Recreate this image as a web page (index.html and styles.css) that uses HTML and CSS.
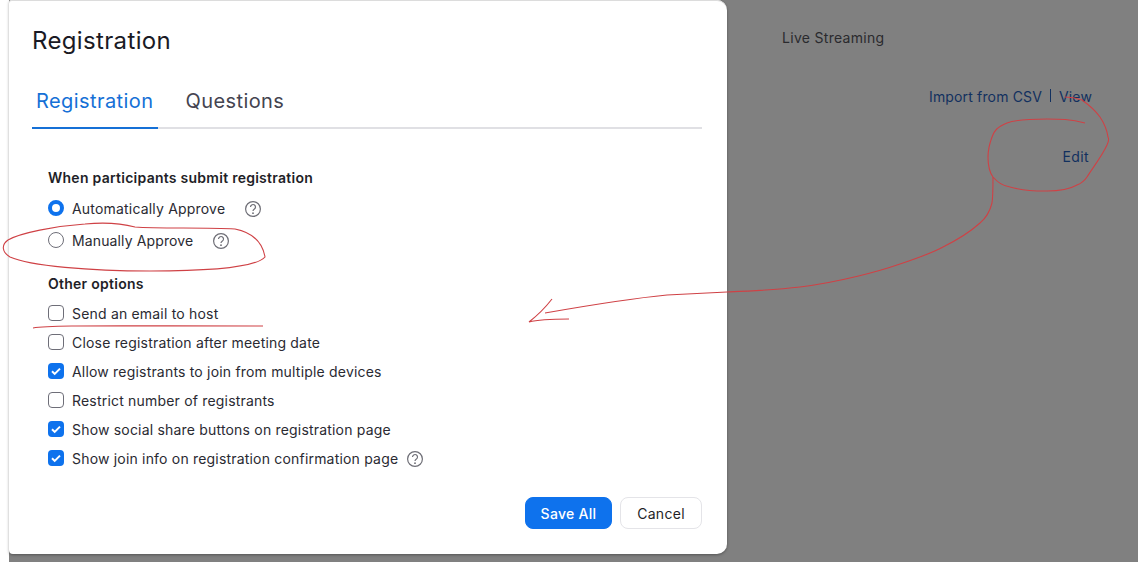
FILE: index.html
```html
<!DOCTYPE html>
<html lang="en">
<head>
<meta charset="utf-8">
<title>Registration</title>
<link rel="stylesheet" href="styles.css">
</head>
<body>
<div class="backdrop">
  <div class="page-top">Live Streaming</div>
  <div class="page-links"><span>Import from CSV</span><i class="sep"></i><span>View</span></div>
  <div class="page-edit">Edit</div>
</div>
<section class="modal">
  <h1 class="title">Registration</h1>
  <div class="tabs">
    <div class="tab active">Registration</div>
    <div class="tab">Questions</div>
  </div>
  <div class="body">
    <h2 class="group-title">When participants submit registration</h2>
    <div class="radios">
      <div class="row"><span class="radio on"></span><span>Automatically Approve</span>
        <svg class="help wide" viewBox="0 0 16 16"><circle cx="8" cy="8" r="7.4"/><path d="M5.5 6.1a2.5 2.5 0 1 1 3.9 2c-.9.6-1.4 1-1.4 2"/><circle class="dot" cx="8" cy="12.2" r=".9"/></svg></div>
      <div class="row"><span class="radio"></span><span>Manually Approve</span>
        <svg class="help wide" viewBox="0 0 16 16"><circle cx="8" cy="8" r="7.4"/><path d="M5.5 6.1a2.5 2.5 0 1 1 3.9 2c-.9.6-1.4 1-1.4 2"/><circle class="dot" cx="8" cy="12.2" r=".9"/></svg></div>
    </div>
    <h2 class="group-title second">Other options</h2>
    <div class="checks">
      <div class="row"><span class="check"></span><span>Send an email to host</span></div>
      <div class="row"><span class="check"></span><span>Close registration after meeting date</span></div>
      <div class="row"><span class="check on"><svg viewBox="0 0 16 16"><path d="M4 8.3l2.7 2.6L12 5.6"/></svg></span><span>Allow registrants to join from multiple devices</span></div>
      <div class="row"><span class="check"></span><span>Restrict number of registrants</span></div>
      <div class="row"><span class="check on"><svg viewBox="0 0 16 16"><path d="M4 8.3l2.7 2.6L12 5.6"/></svg></span><span>Show social share buttons on registration page</span></div>
      <div class="row"><span class="check on"><svg viewBox="0 0 16 16"><path d="M4 8.3l2.7 2.6L12 5.6"/></svg></span><span>Show join info on registration confirmation page</span>
        <svg class="help" viewBox="0 0 16 16"><circle cx="8" cy="8" r="7.4"/><path d="M5.5 6.1a2.5 2.5 0 1 1 3.9 2c-.9.6-1.4 1-1.4 2"/><circle class="dot" cx="8" cy="12.2" r=".9"/></svg></div>
    </div>
  </div>
  <div class="actions">
    <button class="btn primary">Save All</button>
    <button class="btn">Cancel</button>
  </div>
</section>
<svg class="ink" viewBox="0 0 1138 562">
  <path d="M265 257C262 240 250 232 235 229C205 227 160 229 135 227C120 223 105 222 85 224C55 226 20 233 8 240C1 245 2 252 10 257C30 266 90 271 150 271C200 271 255 268 265 257Z"/>
  <path d="M33 328C50 325 100 326 263 326"/>
  <path d="M1085 123C1070 119 1060 119 1047 119C1030 119 1015 120 1007 123C997 127 994 131 992 137C989 145 988 150 988 157C988 167 990 173 993 177C998 183 1003 186 1010 187C1025 191 1035 191 1047 191C1060 191 1070 189 1077 185C1082 183 1085 180 1087 177C1094 166 1102 156 1107 145C1109 141 1109 139 1108 137C1107 130 1104 123 1100 117C1095 110 1089 105 1082 100C1076 98 1071 97 1065 97"/>
  <path d="M993 177C993 188 993 196 992 203C990 211 986 218 980 223C970 232 957 240 943 247C930 254 915 259 900 264C880 271 840 282 800 287C775 290 750 291 727 292C705 293 685 294 667 295C625 299 585 306 545 313"/>
  <path d="M552 299C545 308 538 315 529 322C540 319 555 319 569 319"/>
</svg>
</body>
</html>
```
FILE: styles.css
```css
* { box-sizing: border-box; }
html, body { margin: 0; padding: 0; }
body {
  width: 1138px;
  height: 562px;
  overflow: hidden;
  position: relative;
  background: #fff;
  font-family: Inter, "Liberation Sans", sans-serif;
  color: #222230;
}
.backdrop {
  position: absolute;
  left: 9px;
  top: 0;
  right: 0;
  bottom: 0;
  background: #808080;
}
.page-top {
  position: absolute;
  left: 773px;
  top: 29px;
  font-size: 14px;
  line-height: 17px;
  letter-spacing: .3px;
  color: #2a2a2e;
}
.page-links {
  position: absolute;
  right: 46px;
  top: 88px;
  display: flex;
  align-items: center;
  font-size: 14px;
  line-height: 17px;
  letter-spacing: .15px;
  color: #12305f;
}
.sep {
  width: 1px;
  height: 13px;
  margin: 0 8px 2px 8px;
  background: #12305f;
}
.page-edit {
  position: absolute;
  right: 49px;
  top: 148px;
  font-size: 14px;
  line-height: 17px;
  letter-spacing: .4px;
  color: #12305f;
}
.modal {
  position: absolute;
  left: 9px;
  top: 0;
  width: 718px;
  height: 554px;
  padding: 0 25px 0 23px;
  background: #fff;
  border-radius: 3px 10px 10px 4px;
  box-shadow: inset 0 1px 0 #dcdcdc, 0 1px 3px rgba(0, 0, 0, .35);
  display: flex;
  flex-direction: column;
}
.title {
  margin: 26px 0 0;
  font-size: 24px;
  line-height: 30px;
  font-weight: 400;
  letter-spacing: .35px;
  color: #1a1a24;
}
.tabs {
  margin-top: 17px;
  display: flex;
  border-bottom: 2px solid #e0e0e4;
}
.tab {
  padding: 15px 5px 13px 4px;
  font-size: 20px;
  line-height: 26px;
  letter-spacing: .42px;
  margin-bottom: -2px;
  color: #444450;
  border-bottom: 2px solid transparent;
  margin-right: 23px;
}
.tab.active {
  color: #1570d6;
  border-bottom-color: #1570d6;
}
.body {
  padding: 40px 0 0 16px;
  font-size: 14px;
  letter-spacing: .19px;
  flex: 1;
}
.group-title {
  margin: 0;
  font-size: 14px;
  line-height: 17px;
  font-weight: 600;
  letter-spacing: .26px;
  color: #1f1f28;
}
.group-title.second { margin-top: 24px; }
.radios {
  margin-top: 11px;
  display: flex;
  flex-direction: column;
  gap: 10px;
}
.radios .row { height: 22px; }
.radios .row + .row { letter-spacing: .13px; }
.checks {
  margin-top: 11px;
  display: flex;
  flex-direction: column;
  gap: 9px;
}
.checks .row { height: 20px; }
.row {
  display: flex;
  align-items: center;
  line-height: 17px;
  color: #2a2a32;
}
.radio {
  width: 16px;
  height: 16px;
  margin-right: 8px;
  border: 1px solid #6e6e78;
  border-radius: 50%;
  background: #fff;
  flex: none;
}
.radio.on { border: 4px solid #0e72ed; }
.check {
  width: 16px;
  height: 16px;
  margin-right: 8px;
  border: 1px solid #6e6e78;
  border-radius: 4px;
  background: #fff;
  flex: none;
}
.check.on {
  border: 0;
  background: #0e72ed;
}
.check svg {
  display: block;
  width: 16px;
  height: 16px;
  fill: none;
  stroke: #fff;
  stroke-width: 2;
}
.help {
  width: 16px;
  height: 16px;
  margin: 2px 0 0 9px;
  fill: none;
  stroke: #6e6e76;
  stroke-width: 1.2;
  flex: none;
}
.help.wide { margin-left: 20px; }
.help .dot { fill: #6e6e76; stroke: none; }
.actions {
  display: flex;
  justify-content: flex-end;
  gap: 8px;
  padding-bottom: 25px;
}
.btn {
  height: 32px;
  width: 82px;
  padding: 0;
  font: 400 14px Inter, "Liberation Sans", sans-serif;
  letter-spacing: .3px;
  background: #fff;
  color: #1f1f28;
  border: 1px solid #e4e4e8;
  border-radius: 8px;
}
.btn.primary {
  width: 87px;
  font-weight: 500;
  background: #0e72ed;
  border-color: #0e72ed;
  color: #fff;
}
.ink {
  position: absolute;
  left: 0;
  top: 0;
  width: 1138px;
  height: 562px;
  fill: none;
  stroke: #cf4145;
  stroke-width: 1.1;
  pointer-events: none;
}
```
